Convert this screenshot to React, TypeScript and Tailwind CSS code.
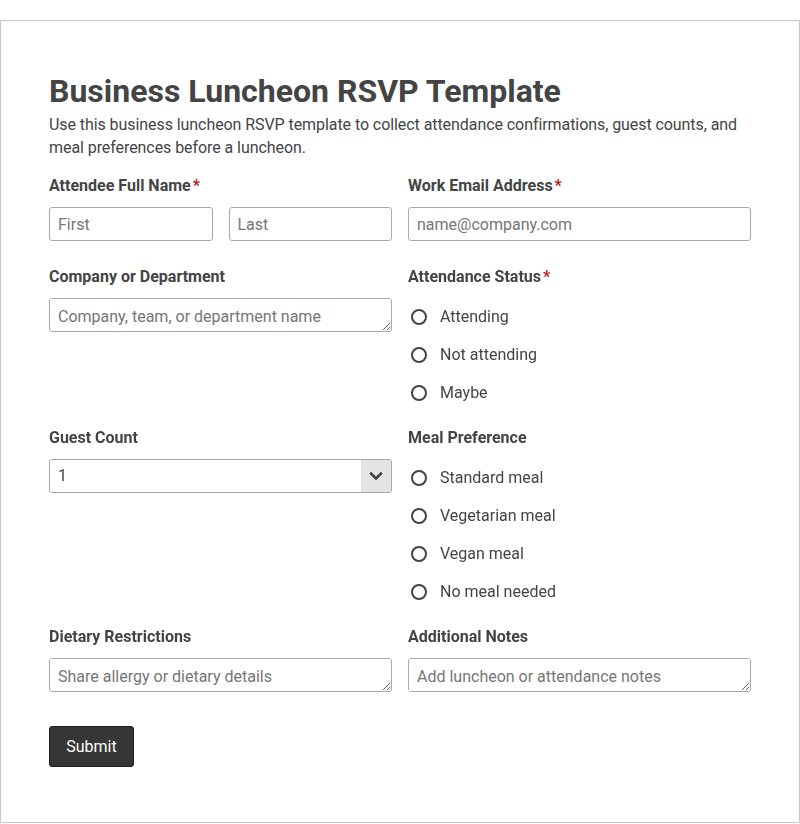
import React from "react";

const Star = () => <span className="text-[#c0171c] ml-[2px]">*</span>;

function Label({ children, req }: { children: React.ReactNode; req?: boolean }) {
  return (
    <div className="text-[16px] leading-6 font-bold text-[#444]">
      {children}
      {req && <Star />}
    </div>
  );
}

const inputCls =
  "block w-full h-[34px] px-2 border border-[#a9a9a9] rounded-[3px] text-[16px] text-[#444] placeholder:text-[#767676] bg-white outline-none";

function Radio({ label }: { label: string }) {
  return (
    <label className="flex items-center h-9 text-[16px] text-[#444]">
      <span className="ml-[3px] w-4 h-4 rounded-full border-2 border-[#444] box-border" />
      <span className="ml-[13px]">{label}</span>
    </label>
  );
}

export default function App() {
  return (
    <div className="bg-white min-h-[824px] pt-5" style={{ fontFamily: "Roboto, 'Liberation Sans', sans-serif" }}>
      <div className="border border-[#c8c8c8] px-12 pt-[50px] pb-[55px]">
        <h1 className="text-[32px] leading-10 font-bold text-[#444]">Business Luncheon RSVP Template</h1>
        <p className="mt-[2px] text-[16px] leading-[23px] text-[#444] tracking-[-0.07px]">
          Use this business luncheon RSVP template to collect attendance confirmations, guest counts, and meal preferences before a luncheon.
        </p>

        <div className="mt-[15px] grid grid-cols-2 gap-x-4">
          <div>
            <Label req>Attendee Full Name</Label>
            <div className="mt-[9px] grid grid-cols-2 gap-4">
              <input className={inputCls} placeholder="First" />
              <input className={inputCls} placeholder="Last" />
            </div>
          </div>
          <div>
            <Label req>Work Email Address</Label>
            <input className={inputCls + " mt-[9px]"} placeholder="name@company.com" />
          </div>
        </div>

        <div className="mt-6 grid grid-cols-2 gap-x-4">
          <div>
            <Label>Company or Department</Label>
            <textarea rows={1} className={inputCls + " mt-[9px] py-[6px] resize-y"} placeholder="Company, team, or department name" />
          </div>
          <div>
            <Label req>Attendance Status</Label>
            <div className="mt-[10px] mb-[-1px] flex flex-col gap-[2px]">
              <Radio label="Attending" />
              <Radio label="Not attending" />
              <Radio label="Maybe" />
            </div>
          </div>
        </div>

        <div className="mt-4 grid grid-cols-2 gap-x-4">
          <div>
            <Label>Guest Count</Label>
            <div className="mt-[9px] flex h-[34px] border border-[#a9a9a9] rounded-[3px] overflow-hidden">
              <div className="flex-1 flex items-center px-2 text-[16px] text-[#444]">1</div>
              <div className="w-[30px] bg-[#e4e4e4] flex items-center justify-center">
                <svg width="14" height="10" viewBox="0 0 14 10" fill="none">
                  <path d="M2 2.5 L7 7.5 L12 2.5" stroke="#444" strokeWidth="2.6" strokeLinecap="round" strokeLinejoin="round" />
                </svg>
              </div>
            </div>
          </div>
          <div>
            <Label>Meal Preference</Label>
            <div className="mt-[10px] mb-[-1px] flex flex-col gap-[2px]">
              <Radio label="Standard meal" />
              <Radio label="Vegetarian meal" />
              <Radio label="Vegan meal" />
              <Radio label="No meal needed" />
            </div>
          </div>
        </div>

        <div className="mt-4 grid grid-cols-2 gap-x-4">
          <div>
            <Label>Dietary Restrictions</Label>
            <textarea rows={1} className={inputCls + " mt-[9px] py-[6px] resize-y"} placeholder="Share allergy or dietary details" />
          </div>
          <div>
            <Label>Additional Notes</Label>
            <textarea rows={1} className={inputCls + " mt-[9px] py-[6px] resize-y"} placeholder="Add luncheon or attendance notes" />
          </div>
        </div>

        <button className="mt-[34px] h-[41px] w-[85px] bg-[#363636] border border-[#1e1e1e] rounded-[3px] text-white text-[16px]">
          Submit
        </button>
      </div>
    </div>
  );
}
